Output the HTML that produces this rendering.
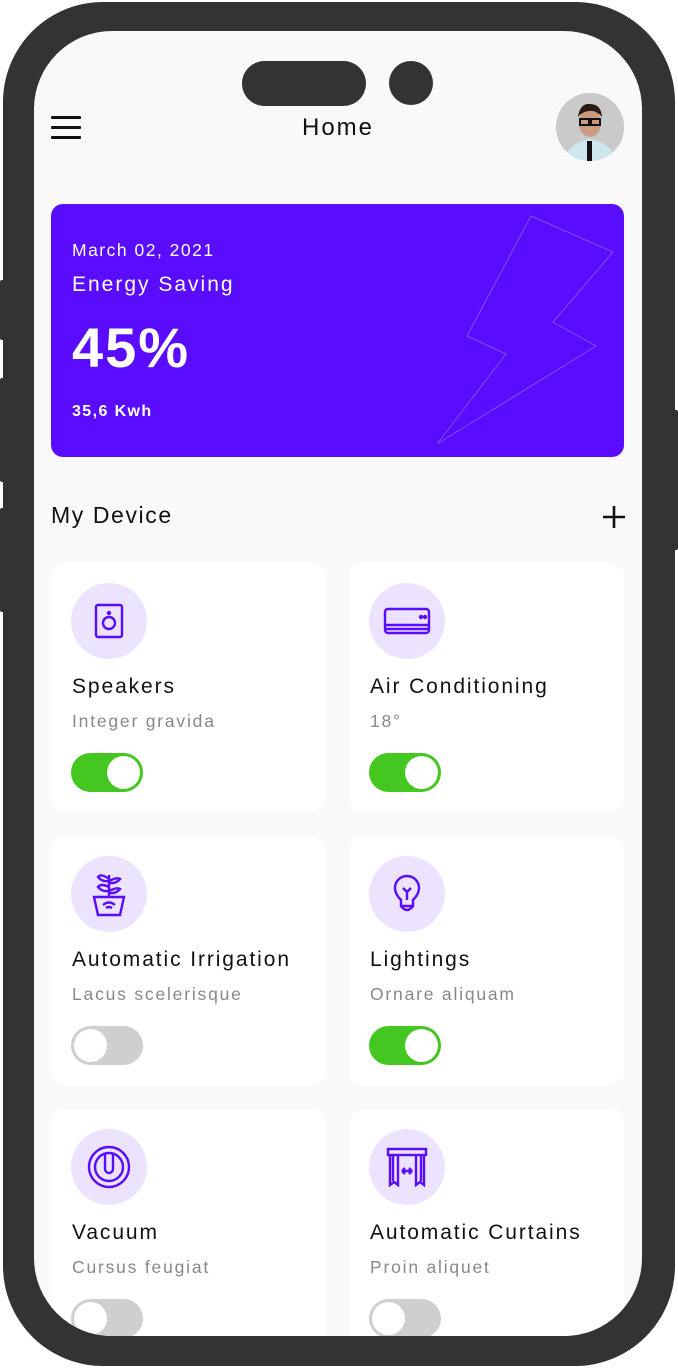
<!DOCTYPE html>
<html><head><style>
*{margin:0;padding:0;box-sizing:border-box}
body{width:678px;height:1369px;background:#fff;position:relative;overflow:hidden;font-family:"Liberation Sans",sans-serif;letter-spacing:1.6px}
.frame{position:absolute;left:3px;top:2px;width:672px;height:1364px;background:#333;border-radius:100px}
.btn{position:absolute;background:#333;border-radius:2px}
.screen{position:absolute;left:34px;top:31px;width:608px;height:1305px;background:#f9f9f9;border-radius:78px;overflow:hidden}
.pill{position:absolute;left:208px;top:30px;width:124px;height:45px;background:#333;border-radius:23px}
.dot{position:absolute;left:355px;top:30px;width:44px;height:44px;background:#333;border-radius:50%}
.title{position:absolute;left:0;width:608px;top:83px;text-align:center;font-size:24px;color:#111;letter-spacing:2px}
.menu{position:absolute;left:17px;top:85px;width:30px}
.menu i{display:block;height:3px;background:#111;margin-bottom:7px;border-radius:1px}
.av{position:absolute;left:522px;top:62px;width:68px;height:68px;border-radius:50%;background:#c9c9c9;overflow:hidden}
.energy{position:absolute;left:17px;top:173px;width:573px;height:253px;background:#5a0cff;border-radius:12px;color:#fff;overflow:hidden}
.card{position:absolute;width:275px;height:249px;background:#fff;border-radius:14px}
.ic{position:absolute;left:20px;top:20px;width:76px;height:76px;border-radius:50%;background:#ebe3ff;display:flex;align-items:center;justify-content:center}
.nm{position:absolute;left:21px;top:112px;font-size:21px;color:#111;letter-spacing:1.9px}
.sb{position:absolute;left:21px;top:148px;font-size:17.5px;color:#888;letter-spacing:1.8px}
.tg{position:absolute;left:20px;top:190px;width:72px;height:39px;border-radius:20px;background:#44c721}
.tg i{position:absolute;top:3px;right:3px;width:33px;height:33px;border-radius:50%;background:#fff}
.tg.off{background:#cfcfcf}
.tg.off i{left:3px;right:auto}
</style></head><body>
<div class="frame"></div>
<div class="btn" style="left:0;top:280px;width:6px;height:60px"></div>
<div class="btn" style="left:0;top:378px;width:6px;height:104px"></div>
<div class="btn" style="left:0;top:508px;width:6px;height:104px"></div>
<div class="btn" style="right:0;top:410px;width:6px;height:140px"></div>
<div class="screen">
<div class="pill"></div><div class="dot"></div>
<div class="menu"><i></i><i></i><i></i></div>
<div class="title">Home</div>
<div class="av"><svg width="68" height="68"><rect width="68" height="68" fill="#cacaca"/><path d="M8 68 Q12 50 34 46 Q56 50 60 68Z" fill="#cfe6ee"/><rect x="31" y="48" width="5" height="20" fill="#111"/><ellipse cx="34" cy="30" rx="11" ry="14" fill="#c99b80"/><path d="M22 24 Q24 10 34 11 Q45 11 46 24 Q40 17 34 18 Q27 18 22 24Z" fill="#2a1c14"/><rect x="24" y="26" width="9" height="6" fill="none" stroke="#111" stroke-width="2"/><rect x="35" y="26" width="9" height="6" fill="none" stroke="#111" stroke-width="2"/></svg></div>
<div class="energy">
<svg style="position:absolute;left:380px;top:10px" width="190" height="235"><path d="M100 2 L182 38 L122 108 L165 132 L6 230 L75 140 L36 122 Z" fill="none" stroke="#7d4fff" stroke-width="1"/></svg>
<div style="position:absolute;left:21px;top:36px;font-size:17.5px;letter-spacing:1.5px">March 02, 2021</div>
<div style="position:absolute;left:21px;top:69px;font-size:21px;letter-spacing:2px">Energy Saving</div>
<div style="position:absolute;left:21px;top:111px;font-size:56px;font-weight:bold;letter-spacing:2px">45%</div>
<div style="position:absolute;left:21px;top:199px;font-size:16px;font-weight:bold;letter-spacing:1.4px">35,6 Kwh</div>
</div>
<div style="position:absolute;left:17px;top:471px;font-size:23px;color:#111;letter-spacing:1.6px">My Device</div>
<svg style="position:absolute;left:568px;top:474px" width="24" height="24"><path d="M12 1 V23 M1 12 H23" stroke="#111" stroke-width="2.6"/></svg>

<div class="card" style="left:17px;top:532px"><div class="ic"><svg width="32" height="36" fill="none" stroke="#5a0cff" stroke-width="2.4"><rect x="3" y="2" width="26" height="32" rx="2"/><circle cx="16" cy="20" r="6"/><circle cx="16" cy="10" r="1" fill="#5a0cff"/></svg></div><div class="nm">Speakers</div><div class="sb">Integer gravida</div><div class="tg"><i></i></div></div>
<div class="card" style="left:315px;top:532px"><div class="ic"><svg width="48" height="28" fill="none" stroke="#5a0cff" stroke-width="2.4"><rect x="2" y="2" width="44" height="24" rx="3"/><line x1="2" y1="18" x2="46" y2="18"/><line x1="2" y1="22" x2="46" y2="22"/><circle cx="38" cy="10" r="1" fill="#5a0cff"/><circle cx="42" cy="10" r="1" fill="#5a0cff"/></svg></div><div class="nm">Air Conditioning</div><div class="sb">18°</div><div class="tg"><i></i></div></div>

<div class="card" style="left:17px;top:805px"><div class="ic"><svg width="34" height="46" fill="none" stroke="#5a0cff" stroke-width="2.4"><path d="M17 26 V4 M17 8 Q9 2 6 6 Q10 11 17 10 M17 10 Q25 6 28 8 Q24 13 17 12 M17 16 Q9 12 6 16 Q10 21 17 20 M17 20 Q25 16 28 18 Q24 23 17 22"/><path d="M2 26 H32 L28 44 H6 Z"/><path d="M11 34 Q17 29 23 34 M14 37 Q17 35 20 37"/></svg></div><div class="nm">Automatic Irrigation</div><div class="sb">Lacus scelerisque</div><div class="tg off"><i></i></div></div>
<div class="card" style="left:315px;top:805px"><div class="ic"><svg width="28" height="40" fill="none" stroke="#5a0cff" stroke-width="2.4"><path d="M8 26 Q2 20 2 14 A12 12 0 0 1 26 14 Q26 20 20 26 V32 H8Z"/><path d="M8 32 Q14 40 20 32 M10 14 L14 18 L18 14 M14 18 V26"/></svg></div><div class="nm">Lightings</div><div class="sb">Ornare aliquam</div><div class="tg"><i></i></div></div>

<div class="card" style="left:17px;top:1078px"><div class="ic"><svg width="44" height="44" fill="none" stroke="#5a0cff" stroke-width="2.4"><circle cx="22" cy="22" r="20"/><circle cx="22" cy="22" r="14"/><path d="M18 8 V24 A4 4 0 0 0 26 24 V8"/></svg></div><div class="nm">Vacuum</div><div class="sb">Cursus feugiat</div><div class="tg off"><i></i></div></div>
<div class="card" style="left:315px;top:1078px"><div class="ic"><svg width="42" height="40" fill="none" stroke="#5a0cff" stroke-width="2.4"><rect x="2" y="2" width="38" height="6"/><path d="M4 8 V38 L8 35 L12 38 V8 M30 8 V38 L34 35 L38 38 V8 M7 8 V34 M35 8 V34"/><path d="M16 24 H26 M16 24 L19 21 M16 24 L19 27 M26 24 L23 21 M26 24 L23 27"/></svg></div><div class="nm">Automatic Curtains</div><div class="sb">Proin aliquet</div><div class="tg off"><i></i></div></div>
</div>
</body></html>
